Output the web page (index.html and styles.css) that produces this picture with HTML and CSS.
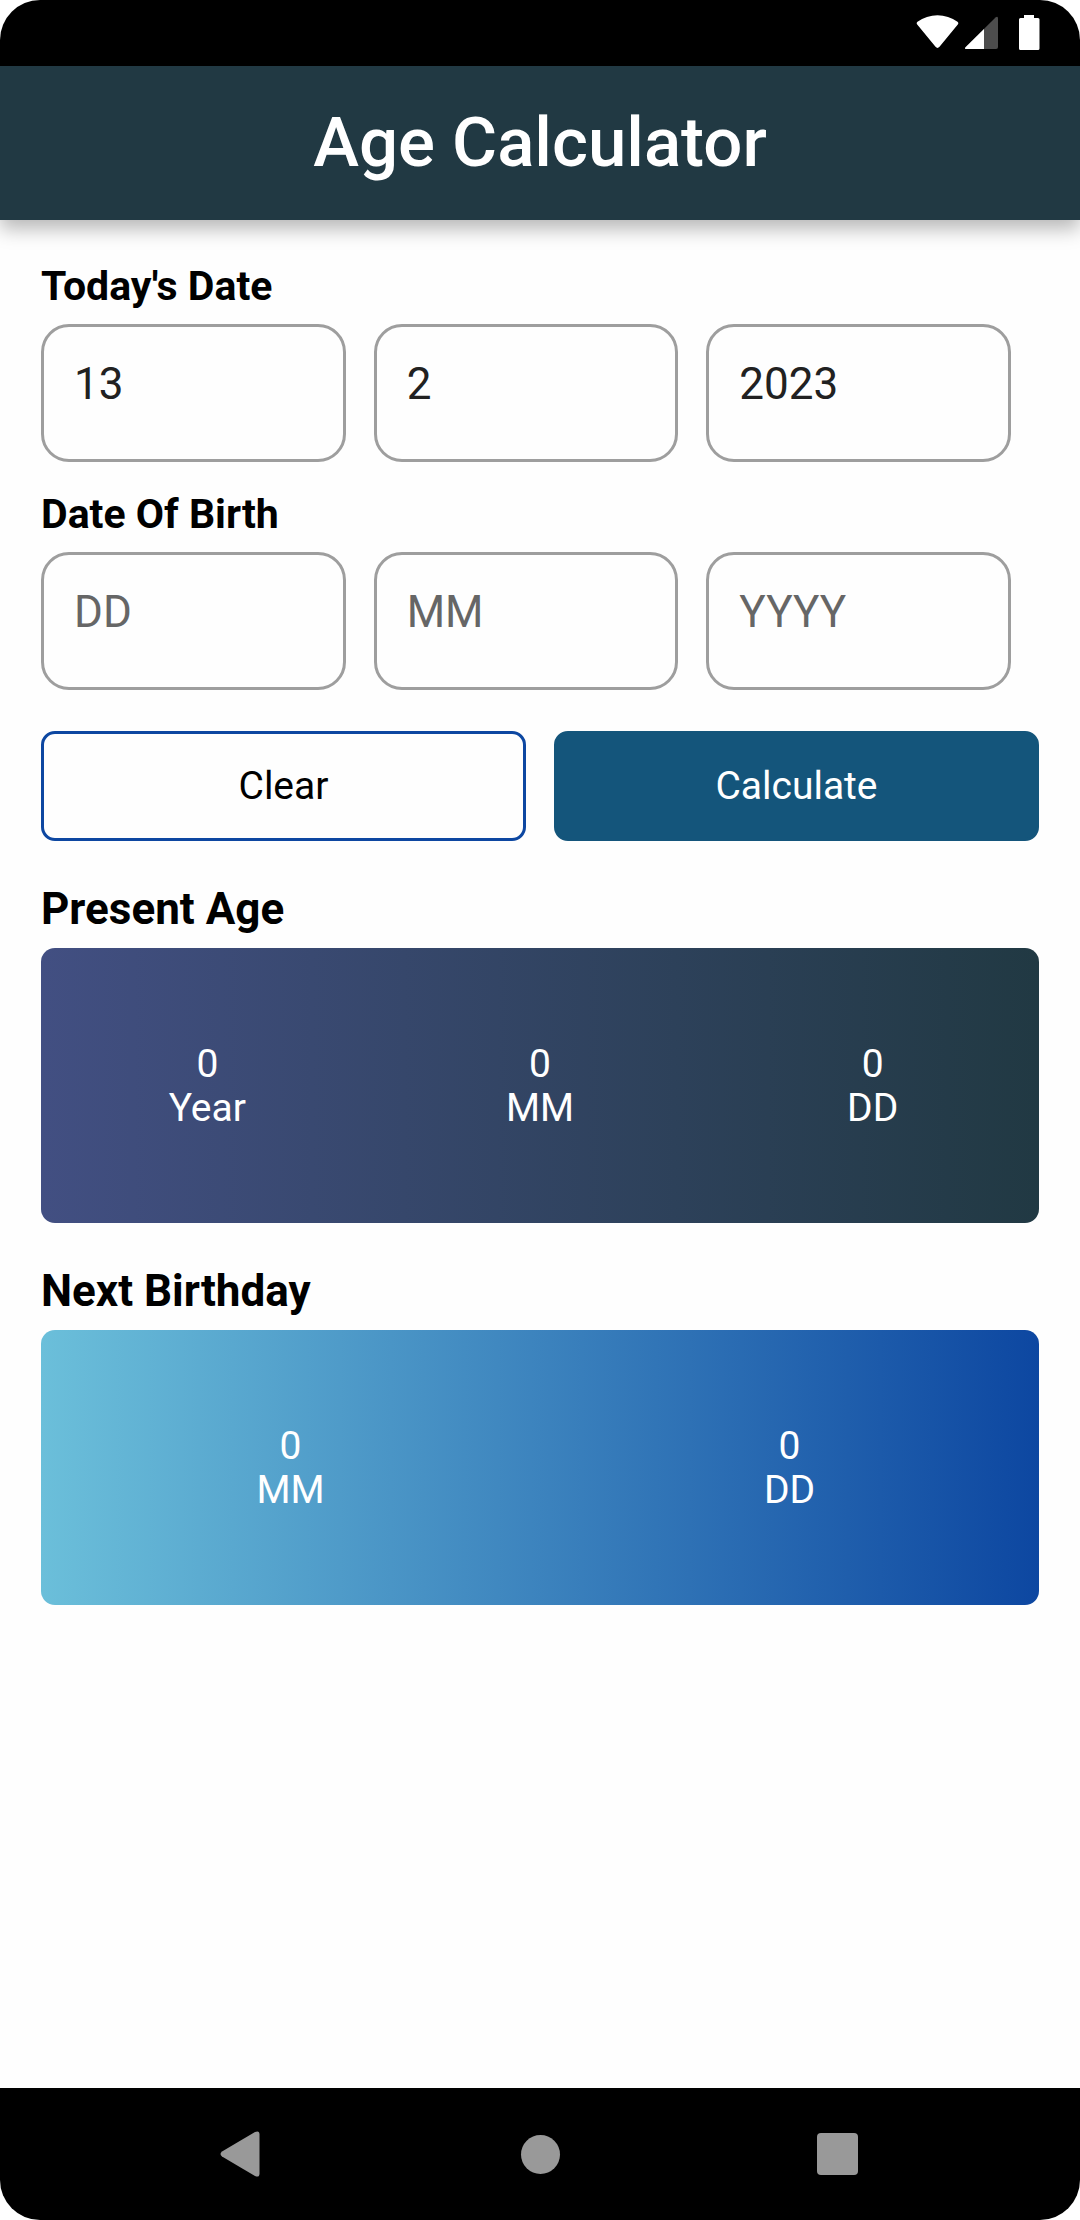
FILE: index.html
```html
<!DOCTYPE html>
<html lang="en">
<head>
<meta charset="utf-8">
<meta name="viewport" content="width=device-width, initial-scale=1">
<title>Age Calculator</title>
<link rel="stylesheet" href="styles.css">
</head>
<body>
<div class="device">
  <div class="status-bar">
    <svg class="status-icons" width="124" height="36" viewBox="0 0 124 36" role="img" aria-label="Wi-Fi, mobile signal, battery">
      <path fill="#fff" d="M1.2 9.4Q0 8 1.5 6.8C13-1.9 30-1.9 41.500 6.800Q43 8 41.800 9.400L23.500 31.800Q21.500 34 19.500 31.800Z"/>
      <path fill="#4d4d4d" d="M49.500 32.200 79.500 2.500Q82 .5 82 3.500V32Q82 34 80 34H50.500Q48 34 49.500 32.200Z"/>
      <path fill="#fff" d="M68 13.900V34H50.500Q48 34 49.500 32.200Z"/>
      <path fill="#fff" d="M108 0h10v3h4q1.500 0 1.500 1.500V33.500Q123.500 35 122 35H104.500Q103 35 103 33.500V4.500Q103 3 104.500 3H108Z"/>
    </svg>
  </div>
  <header class="app-bar"><h1 class="app-title">Age Calculator</h1></header>
  <main class="content">
    <form class="form">
      <fieldset class="date-group">
        <legend class="date-label">Today's Date</legend>
        <div class="date-row">
          <input class="date-input" type="text" inputmode="numeric" aria-label="Today's day" value="13">
          <input class="date-input" type="text" inputmode="numeric" aria-label="Today's month" value="2">
          <input class="date-input" type="text" inputmode="numeric" aria-label="Today's year" value="2023">
        </div>
      </fieldset>
      <fieldset class="date-group">
        <legend class="date-label">Date Of Birth</legend>
        <div class="date-row">
          <input class="date-input" type="text" inputmode="numeric" aria-label="Birth day" placeholder="DD">
          <input class="date-input" type="text" inputmode="numeric" aria-label="Birth month" placeholder="MM">
          <input class="date-input" type="text" inputmode="numeric" aria-label="Birth year" placeholder="YYYY">
        </div>
      </fieldset>
      <div class="actions">
        <button class="button button-outline" type="reset">Clear</button>
        <button class="button button-filled" type="button">Calculate</button>
      </div>
    </form>
    <section class="result">
      <h2 class="result-title">Present Age</h2>
      <div class="card card-age">
        <div class="figure"><span>0</span><span>Year</span></div>
        <div class="figure"><span>0</span><span>MM</span></div>
        <div class="figure"><span>0</span><span>DD</span></div>
      </div>
    </section>
    <section class="result">
      <h2 class="result-title">Next Birthday</h2>
      <div class="card card-birthday">
        <div class="figure"><span>0</span><span>MM</span></div>
        <div class="figure"><span>0</span><span>DD</span></div>
      </div>
    </section>
  </main>
  <nav class="nav-bar" aria-label="System">
    <button class="nav-button" type="button" aria-label="Back">
      <svg width="46" height="46" viewBox="0 0 46 46"><path fill="#999" d="M2 20.500 35 1Q39.500 -1 39.500 3.500V42.500Q39.500 47 35 45L2 25.500Q-1 23 2 20.500Z"/></svg>
    </button>
    <button class="nav-button" type="button" aria-label="Home">
      <svg width="46" height="46" viewBox="0 0 46 46"><circle cx="23.500" cy="23.500" r="19.500" fill="#999"/></svg>
    </button>
    <button class="nav-button" type="button" aria-label="Recent apps">
      <svg width="46" height="46" viewBox="0 0 46 46"><rect x="3" y="2" width="41" height="42" rx="4" fill="#999"/></svg>
    </button>
  </nav>
</div>
</body>
</html>
```
FILE: styles.css
```css
* {
  box-sizing: border-box;
}

body {
  margin: 0;
  background: #fff;
  font-family: Roboto, "Liberation Sans", sans-serif;
}

.device {
  display: flex;
  flex-direction: column;
  min-height: 100vh;
  overflow: hidden;
  border-radius: 40px;
  background: #fefefe;
}

.status-bar {
  display: flex;
  flex: none;
  align-items: center;
  justify-content: flex-end;
  height: 66px;
  padding-right: 40px;
  background: #000;
}

.app-bar {
  display: flex;
  flex: none;
  align-items: center;
  justify-content: center;
  height: 154px;
  background: #213943;
  box-shadow: 0 9px 18px rgba(0, 0, 0, 0.28);
}

.app-title {
  margin: 0;
  color: #fff;
  font-size: 69px;
  font-weight: 500;
  line-height: 80px;
}

.content {
  display: flex;
  flex: 1;
  flex-direction: column;
  gap: 42px;
  padding: 42px 41px;
}

.form {
  display: flex;
  flex-direction: column;
  gap: 28px;
}

.date-group {
  min-width: 0;
  margin: 0;
  padding: 0;
  border: 0;
}

.date-label {
  margin-bottom: 14px;
  padding: 0;
  color: #000;
  font-size: 41px;
  font-weight: 700;
  line-height: 48px;
}

.date-row {
  display: grid;
  grid-template-columns: repeat(3, 1fr);
  gap: 28px;
  padding-right: 28px;
}

.date-input {
  width: 100%;
  height: 138px;
  padding: 31px 30px 49px;
  border: 3px solid #9e9e9e;
  border-radius: 28px;
  background: transparent;
  color: #212121;
  font: 400 44px/52px Roboto, "Liberation Sans", sans-serif;
}

.date-input::placeholder {
  color: #666;
  opacity: 1;
}

.actions {
  display: grid;
  grid-template-columns: 1fr 1fr;
  gap: 28px;
  padding-top: 13px;
}

.button {
  height: 110px;
  border: 3px solid #0d47a1;
  border-radius: 14px;
  font: 400 39px/44px Roboto, "Liberation Sans", sans-serif;
}

.button-outline {
  background: transparent;
  color: #000;
}

.button-filled {
  border-color: #14557b;
  background: #14557b;
  color: #fff;
}

.result-title {
  margin: 0 0 13px;
  color: #000;
  font-size: 44px;
  font-weight: 700;
  line-height: 52px;
}

.card {
  display: flex;
  align-items: center;
  min-height: 275px;
  border-radius: 14px;
  color: #fff;
  font-size: 39px;
  line-height: 44px;
}

.card-age {
  background: linear-gradient(to right, #424f82, #213943);
}

.card-birthday {
  background: linear-gradient(to right, #6bbfda, #0d47a1);
}

.figure {
  display: flex;
  flex: 1;
  flex-direction: column;
  align-items: center;
}

.nav-bar {
  display: flex;
  flex: none;
  align-items: center;
  justify-content: space-around;
  height: 132px;
  padding: 0 95px;
  background: #000;
}

.nav-button {
  display: flex;
  padding: 0;
  border: 0;
  background: none;
}
```
